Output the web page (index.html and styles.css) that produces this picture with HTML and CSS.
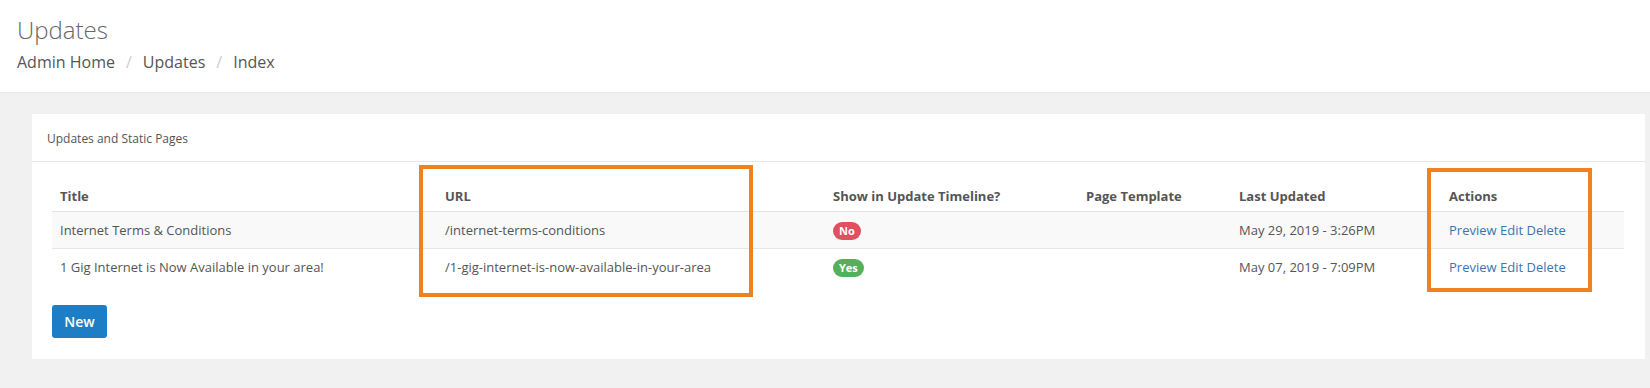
FILE: index.html
```html
<!DOCTYPE html>
<html>
<head>
<meta charset="utf-8">
<link rel="stylesheet" href="styles.css">
</head>
<body>
<header class="page-header">
  <h1 class="page-title">Updates</h1>
  <nav class="breadcrumb">
    <span class="crumb">Admin Home</span><span class="sep">/</span>
    <span class="crumb">Updates</span><span class="sep">/</span>
    <span class="crumb">Index</span>
  </nav>
</header>
<main class="content">
  <section class="card">
    <div class="card-header">Updates and Static Pages</div>
    <div class="card-body">
      <table class="table">
        <colgroup>
          <col class="c-title"><col class="c-url"><col class="c-show"><col class="c-tpl"><col class="c-date"><col class="c-act">
        </colgroup>
        <thead>
          <tr><th>Title</th><th>URL</th><th>Show in Update Timeline?</th><th>Page Template</th><th>Last Updated</th><th>Actions</th></tr>
        </thead>
        <tbody>
          <tr class="striped">
            <td>Internet Terms &amp; Conditions</td>
            <td>/internet-terms-conditions</td>
            <td><span class="badge badge-no">No</span></td>
            <td></td>
            <td>May 29, 2019 - 3:26PM</td>
            <td><a class="link">Preview</a> <a class="link">Edit</a> <a class="link">Delete</a></td>
          </tr>
          <tr>
            <td>1 Gig Internet is Now Available in your area!</td>
            <td>/1-gig-internet-is-now-available-in-your-area</td>
            <td><span class="badge badge-yes">Yes</span></td>
            <td></td>
            <td>May 07, 2019 - 7:09PM</td>
            <td><a class="link">Preview</a> <a class="link">Edit</a> <a class="link">Delete</a></td>
          </tr>
        </tbody>
      </table>
      <button class="btn">New</button>
    </div>
    <div class="highlight hl-url"></div>
    <div class="highlight hl-actions"></div>
  </section>
</main>
</body>
</html>
```
FILE: styles.css
```css
html, body {
  margin: 0;
  padding: 0;
}
body {
  background: #f1f1f1;
  font-family: "Open Sans", "Noto Sans", sans-serif;
  color: #555;
  height: 388px;
  overflow: hidden;
}
.page-header {
  background: #fff;
  border-bottom: 1px solid #e6e6e6;
  height: 93px;
  padding: 0 17px;
  box-sizing: border-box;
}
.page-title {
  margin: 0;
  padding-top: 15px;
  font-size: 24px;
  font-weight: 300;
  line-height: 30px;
  color: #666;
}
.breadcrumb {
  margin-top: 7px;
  font-size: 16px;
  line-height: 20px;
  color: #555;
  display: flex;
  align-items: center;
}
.sep {
  color: #ccc;
  padding: 0 11px;
}
.content {
  padding: 21px 5px 0 32px;
}
.card {
  position: relative;
  background: #fff;
  height: 245px;
}
.card-header {
  height: 48px;
  box-sizing: border-box;
  border-bottom: 1px solid #e6e6e6;
  padding: 0 15px;
  font-size: 12px;
  line-height: 49px;
  color: #555;
}
.card-body {
  padding: 19px 20px 20px;
}
.table {
  width: 1572px;
  border-collapse: collapse;
  table-layout: fixed;
  font-size: 13px;
}
.c-title { width: 385px; }
.c-url { width: 388px; }
.c-show { width: 253px; }
.c-tpl { width: 153px; }
.c-date { width: 210px; }
.c-act { width: 183px; }
.table th {
  text-align: left;
  font-weight: 700;
  color: #555;
  padding: 0 8px;
  height: 30px;
  border-bottom: 1px solid #e3e3e3;
  vertical-align: middle;
}
.table td {
  padding: 0 8px;
  height: 36px;
  border-bottom: 1px solid #e8e8e8;
  vertical-align: middle;
  white-space: nowrap;
}
.table tbody tr:last-child td {
  border-bottom: none;
}
.striped td {
  background: #f9f9f9;
}
.badge {
  display: inline-block;
  font-size: 11px;
  font-weight: 700;
  color: #fff;
  line-height: 18px;
  height: 18px;
  padding: 0 6px;
  border-radius: 9px;
  vertical-align: middle;
}
.badge-no { background: #e0515f; }
.badge-yes { background: #55b05b; }
.link {
  color: #3a75ad;
  text-decoration: none;
}
.btn {
  margin-top: 20px;
  display: block;
  width: 55px;
  height: 33px;
  border: none;
  border-radius: 3px;
  background: #1e7ec5;
  color: #fff;
  font-family: "Open Sans", "Noto Sans", sans-serif;
  font-size: 14px;
  font-weight: 600;
  padding: 0;
}
.highlight {
  position: absolute;
  border: 4px solid #f0821e;
  box-sizing: border-box;
}
.hl-url {
  left: 387px;
  top: 51px;
  width: 334px;
  height: 132px;
}
.hl-actions {
  left: 1395px;
  top: 54px;
  width: 165px;
  height: 124px;
}
```
